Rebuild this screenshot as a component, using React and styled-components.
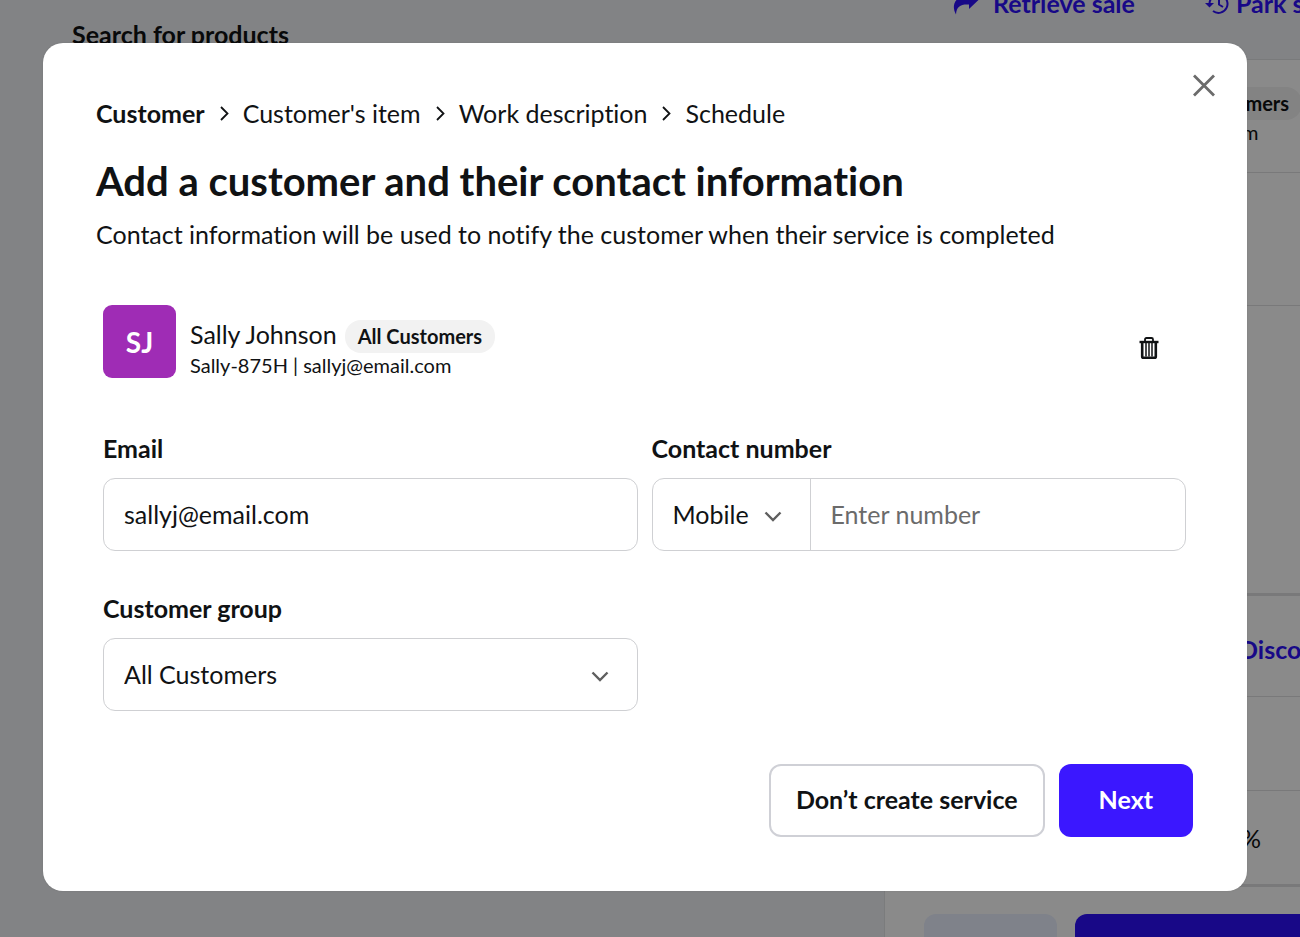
import React from 'react'
import styled, { createGlobalStyle } from 'styled-components'

const GlobalStyle=createGlobalStyle`
*{
  box-sizing: border-box;
}
body{
  margin: 0;
  background: #f1f3f5;
  color: #101214;
  font-family: Lato, sans-serif;
  font-size: 25px;
  font-variant-ligatures: none;
  line-height: 32px;
}
button,input,select{
  font: inherit;
  font-variant-ligatures: none;
  color: inherit;
}
h1,p{
  margin: 0;
}
`;
const Page=styled.div`
position: relative;
min-height: 100vh;
overflow: hidden;
`;
const Register=styled.div`
position: absolute;
inset: 0;
display: grid;
grid-template-columns: 68% 1fr;
grid-template-rows: 59px 1fr;
overflow: hidden;
`;
const SearchLabel=styled.div`
padding: 18px 72px 0;
font-weight: 700;
white-space: nowrap;
`;
const SaleActions=styled.div`
display: flex;
align-items: flex-end;
gap: 70px;
padding: 0 0 40px 69px;
overflow: hidden;
`;
const SaleAction=styled.button`
display: flex;
align-items: center;
flex-shrink: 0;
gap: ${({$gap})=>$gap}px;
height: 32px;
padding: 0;
border: 0;
background: none;
color: #2d0ffa;
font-weight: 700;
white-space: nowrap;
`;
const Products=styled.div`
min-width: 0;
`;
const SalePanel=styled.div`
background: #ffffff;
border-left: 1px solid #e4e5e8;
border-top: 1px solid #e0e1e4;
min-width: 0;
overflow: hidden;
`;
const PanelRow=styled.div`
display: flex;
align-items: ${({$top})=>$top ? 'flex-start' : 'center'};
height: ${({$height})=>$height}px;
padding-top: ${({$top})=>$top || 0}px;
padding-left: ${({$indent})=>$indent || 0}px;
border-bottom: ${({$thick})=>$thick ? 3 : 1}px solid #e0e0e2;
white-space: nowrap;
`;
const DiscountLink=styled.a`
color: #2d0ffa;
font-weight: 700;
text-decoration: none;
`;
const PanelFooter=styled.div`
display: flex;
gap: 18px;
padding: 27px 0 0 39px;
`;
const PanelButton=styled.button`
flex-shrink: 0;
width: ${({$width})=>$width}px;
height: 73px;
border: 0;
border-radius: 12px;
background: ${({$primary})=>$primary ? '#2d0ffa' : '#eaf0ff'};
`;
const Overlay=styled.div`
position: relative;
min-height: 100vh;
padding: 43px 53px 46px 43px;
background: rgba(0,0,0,0.46);
`;
const Modal=styled.div`
position: relative;
padding: 54px 54px 54px 53px;
border-radius: 20px;
background: #ffffff;
box-shadow: 0 0 2px rgba(0,0,0,0.1);
`;
const CloseButton=styled.button`
position: absolute;
top: 26px;
right: 27px;
width: 32px;
height: 32px;
display: grid;
place-items: center;
padding: 0;
border: 0;
background: none;
color: #6b6b6b;
`;
const Breadcrumbs=styled.nav`
display: flex;
align-items: center;
gap: 14px;
`;
const Crumb=styled.a`
color: inherit;
font-weight: ${({$active})=>$active ? 700 : 400};
text-decoration: none;
`;
const Title=styled.h1`
margin-top: 28px;
font-size: 40px;
font-weight: 700;
line-height: 48px;
`;
const Subtitle=styled.p`
margin-top: 13px;
`;
const Details=styled.div`
padding: 55px 7px 0 7px;
`;
const Customer=styled.div`
display: flex;
align-items: center;
gap: 14px;
`;
const Avatar=styled.div`
display: grid;
place-items: center;
flex-shrink: 0;
width: 73px;
height: 73px;
border-radius: 9px;
background: #9f2cb5;
color: #ffffff;
font-size: 28px;
font-weight: 700;
`;
const CustomerInfo=styled.div`
flex: 1;
padding-top: 12px;
`;
const NameLine=styled.div`
display: flex;
align-items: baseline;
gap: 8px;
height: 35px;
`;
const GroupTag=styled.span`
padding: 0 13px;
border-radius: 16px;
background: #f2f2f2;
font-size: 20px;
font-weight: 700;
line-height: 33px;
`;
const CustomerCode=styled.div`
font-size: 20px;
line-height: 24px;
`;
const DeleteButton=styled.button`
display: grid;
place-items: center;
width: 32px;
height: 32px;
margin: 12px 21px 0 0;
padding: 0;
border: 0;
background: none;
`;
const Form=styled.div`
display: grid;
grid-template-columns: 1fr 1fr;
gap: 41px 14px;
margin-top: 54px;
`;
const Field=styled.div`
min-width: 0;
`;
const Label=styled.label`
display: block;
margin-bottom: 14px;
font-weight: 700;
`;
const ControlBox=styled.div`
display: flex;
height: 73px;
border: 1px solid #cfd0d3;
border-radius: 12px;
background: #ffffff;
overflow: hidden;
`;
const TextInput=styled.input`
flex: 1;
min-width: 0;
padding: 0 20px 2px;
border: 0;
outline: 0;
background: none;
&::placeholder{
  color: #6b6b6b;
  opacity: 1;
}
`;
const SelectBox=styled.div`
position: relative;
flex: ${({$narrow})=>$narrow ? '0 0 158px' : '1'};
border-right: ${({$narrow})=>$narrow ? '1px solid #cfd0d3' : '0'};
svg{
  position: absolute;
  top: 32px;
  right: 28px;
  pointer-events: none;
}
`;
const Select=styled.select`
appearance: none;
width: 100%;
height: 100%;
padding: 0 20px 2px;
border: 0;
outline: 0;
background: none;
`;
const Actions=styled.div`
display: flex;
justify-content: flex-end;
gap: 14px;
margin-top: 53px;
`;
const ActionButton=styled.button`
height: 73px;
padding: 0 ${({$primary})=>$primary ? 40 : 25}px 4px;
border: ${({$primary})=>$primary ? '0' : '2px solid #cfd0d6'};
border-radius: 12px;
background: ${({$primary})=>$primary ? '#3b17ff' : '#ffffff'};
color: ${({$primary})=>$primary ? '#ffffff' : '#101214'};
font-weight: 700;
`;

const ArrowIcon = () => (
  <svg width="26" height="24" viewBox="0 0 26 24" fill="currentColor" aria-hidden="true">
    <path d="M16 0L26 8.500L16 18V13.500C8 13 3.500 15 3 23.500C-2 15 1.500 4.500 16 4.500Z"/>
  </svg>
)
const HistoryIcon = () => (
  <svg width="24" height="24" viewBox="0 0 24 24" fill="none" stroke="currentColor" strokeWidth="2" aria-hidden="true">
    <path d="M4.500 13A9 9 0 1 1 8 20M14 7.500V13.500L18 16"/>
    <path d="M0 12H9L4.500 16.500Z" fill="currentColor" stroke="none"/>
  </svg>
)
const CrumbArrow = () => (
  <svg width="10" height="16" viewBox="0 0 10 16" fill="none" stroke="currentColor" strokeWidth="1.800" aria-hidden="true">
    <path d="M2 2L8.500 8.500L2 15"/>
  </svg>
)
const ChevronIcon = () => (
  <svg width="18" height="12" viewBox="0 0 18 12" fill="none" stroke="#5f5f5f" strokeWidth="2.400" aria-hidden="true">
    <path d="M1.500 1.500L9 9L16.500 1.500"/>
  </svg>
)
const CloseIcon = () => (
  <svg width="24" height="24" viewBox="0 0 24 24" fill="none" stroke="currentColor" strokeWidth="2.800" aria-hidden="true">
    <path d="M2 2.500L22 22.500M22 2.500L2 22.500"/>
  </svg>
)
const TrashIcon = () => (
  <svg width="20" height="24" viewBox="0 0 20 24" fill="none" stroke="#101214" aria-hidden="true">
    <path d="M0.500 6H19.500" strokeWidth="2.400"/>
    <path d="M6 5.500V3.500Q6 2 7.500 2H12.500Q14 2 14 3.500V5.500" strokeWidth="1.800"/>
    <path d="M3.200 6V20.500Q3.200 21.800 4.500 21.800H15.500Q16.800 21.800 16.800 20.500V6" strokeWidth="2.600"/>
    <path d="M7 7V20.500M10 7V20.500M13 7V20.500" strokeWidth="1.500"/>
  </svg>
)

const CustomerSummary = () => (
  <CustomerInfo>
    <NameLine>Sally Johnson <GroupTag>All Customers</GroupTag></NameLine>
    <CustomerCode>Sally-875H | sallyj@email.com</CustomerCode>
  </CustomerInfo>
)

const steps=["Customer","Customer's item","Work description","Schedule"]

const App = () => {
  return (
    <Page>
      <GlobalStyle/>
      <Register aria-hidden="true" inert>
        <SearchLabel>Search for products</SearchLabel>
        <SaleActions>
          <SaleAction $gap={14}><ArrowIcon/>Retrieve sale</SaleAction>
          <SaleAction $gap={7}><HistoryIcon/>Park sale</SaleAction>
        </SaleActions>
        <Products/>
        <SalePanel>
          <PanelRow $height={113} $indent={112} $top={13}><CustomerSummary/></PanelRow>
          <PanelRow $height={133}/>
          <PanelRow $height={290} $thick/>
          <PanelRow $height={101} $indent={354} $top={37}><DiscountLink href="#">Discount</DiscountLink></PanelRow>
          <PanelRow $height={94}/>
          <PanelRow $height={96} $indent={356} $thick>%</PanelRow>
          <PanelFooter>
            <PanelButton $width={133}/>
            <PanelButton $width={460} $primary/>
          </PanelFooter>
        </SalePanel>
      </Register>
      <Overlay>
        <Modal role="dialog" aria-labelledby="title">
          <CloseButton aria-label="Close"><CloseIcon/></CloseButton>
          <Breadcrumbs>
            {steps.map((step,index)=>(
              <React.Fragment key={step}>
                {index>0 && <CrumbArrow/>}
                <Crumb href="#" $active={index===0}>{step}</Crumb>
              </React.Fragment>
            ))}
          </Breadcrumbs>
          <Title id="title">Add a customer and their contact information</Title>
          <Subtitle>Contact information will be used to notify the customer when their service is completed</Subtitle>
          <Details>
            <Customer>
              <Avatar>SJ</Avatar>
              <CustomerSummary/>
              <DeleteButton aria-label="Remove customer"><TrashIcon/></DeleteButton>
            </Customer>
            <Form>
              <Field>
                <Label htmlFor="email">Email</Label>
                <ControlBox><TextInput id="email" type="email" defaultValue="sallyj@email.com"/></ControlBox>
              </Field>
              <Field>
                <Label htmlFor="number">Contact number</Label>
                <ControlBox>
                  <SelectBox $narrow>
                    <Select aria-label="Number type"><option>Mobile</option></Select>
                    <ChevronIcon/>
                  </SelectBox>
                  <TextInput id="number" type="tel" placeholder="Enter number"/>
                </ControlBox>
              </Field>
              <Field>
                <Label htmlFor="group">Customer group</Label>
                <ControlBox>
                  <SelectBox>
                    <Select id="group"><option>All Customers</option></Select>
                    <ChevronIcon/>
                  </SelectBox>
                </ControlBox>
              </Field>
            </Form>
          </Details>
          <Actions>
            <ActionButton>Don’t create service</ActionButton>
            <ActionButton $primary>Next</ActionButton>
          </Actions>
        </Modal>
      </Overlay>
    </Page>
  )
}

export default App
